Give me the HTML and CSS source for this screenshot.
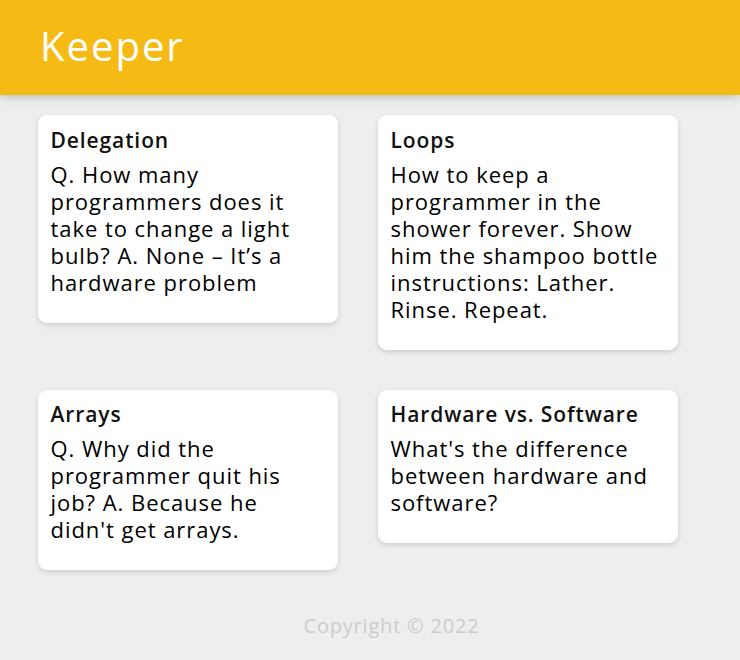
FILE: index.html
```html
<!DOCTYPE html>
<html lang="en">
<head>
<meta charset="utf-8">
<title>Keeper</title>
<link rel="stylesheet" href="styles.css">
</head>
<body>
<header class="app-header">
  <h1 class="app-title">Keeper</h1>
</header>
<main class="notes">
  <div class="note">
    <h2 class="note-title">Delegation</h2>
    <p class="note-body">Q. How many programmers does it take to change a light bulb? A. None – It’s a hardware problem</p>
  </div>
  <div class="note">
    <h2 class="note-title">Loops</h2>
    <p class="note-body">How to keep a programmer in the shower forever. Show him the shampoo bottle instructions: Lather. Rinse. Repeat.</p>
  </div>
  <div class="note">
    <h2 class="note-title">Arrays</h2>
    <p class="note-body">Q. Why did the programmer quit his job? A. Because he didn't get arrays.</p>
  </div>
  <div class="note">
    <h2 class="note-title">Hardware vs. Software</h2>
    <p class="note-body">What's the difference between hardware and software?</p>
  </div>
</main>
<footer class="app-footer">
  <p class="copyright">Copyright © 2022</p>
</footer>
</body>
</html>
```

FILE: styles.css
```css
html, body {
  margin: 0;
  padding: 0;
  background: #eeeeee;
  font-family: "Open Sans", "Liberation Sans", sans-serif;
  color: #000;
}

.app-header {
  background-color: #f5ba13;
  height: 95px;
  padding: 0 40px;
  box-sizing: border-box;
  box-shadow: 0 0 10px 0 rgba(0, 0, 0, 0.3);
}

.app-title {
  margin: 0;
  color: #fff;
  font-family: "Open Sans", "Liberation Sans", sans-serif;
  font-weight: 400;
  font-size: 40px;
  line-height: 92px;
  letter-spacing: 2px;
}

.notes {
  display: flex;
  flex-wrap: wrap;
  align-items: flex-start;
  padding: 0 18px;
  width: 680px;
}

.note {
  background: #fff;
  border-radius: 9px;
  box-shadow: 0 2px 5px #ccc;
  padding: 12.5px;
  width: 300px;
  box-sizing: border-box;
  margin: 20px;
}

.note-title {
  margin: 0 0 8px 0;
  font-size: 21px;
  font-weight: 600;
  line-height: 25px;
  letter-spacing: 0.9px;
  color: #111;
}

.note-body {
  margin: 0 0 14.5px 0;
  font-size: 22px;
  line-height: 27px;
  letter-spacing: 0.95px;
  white-space: pre-wrap;
  word-wrap: break-word;
}

.app-footer {
  padding-left: 43px;
  text-align: center;
}

.copyright {
  margin: 22px 0 0 0;
  color: #ccc;
  font-size: 20px;
  line-height: 27px;
  letter-spacing: 0.8px;
}
```
